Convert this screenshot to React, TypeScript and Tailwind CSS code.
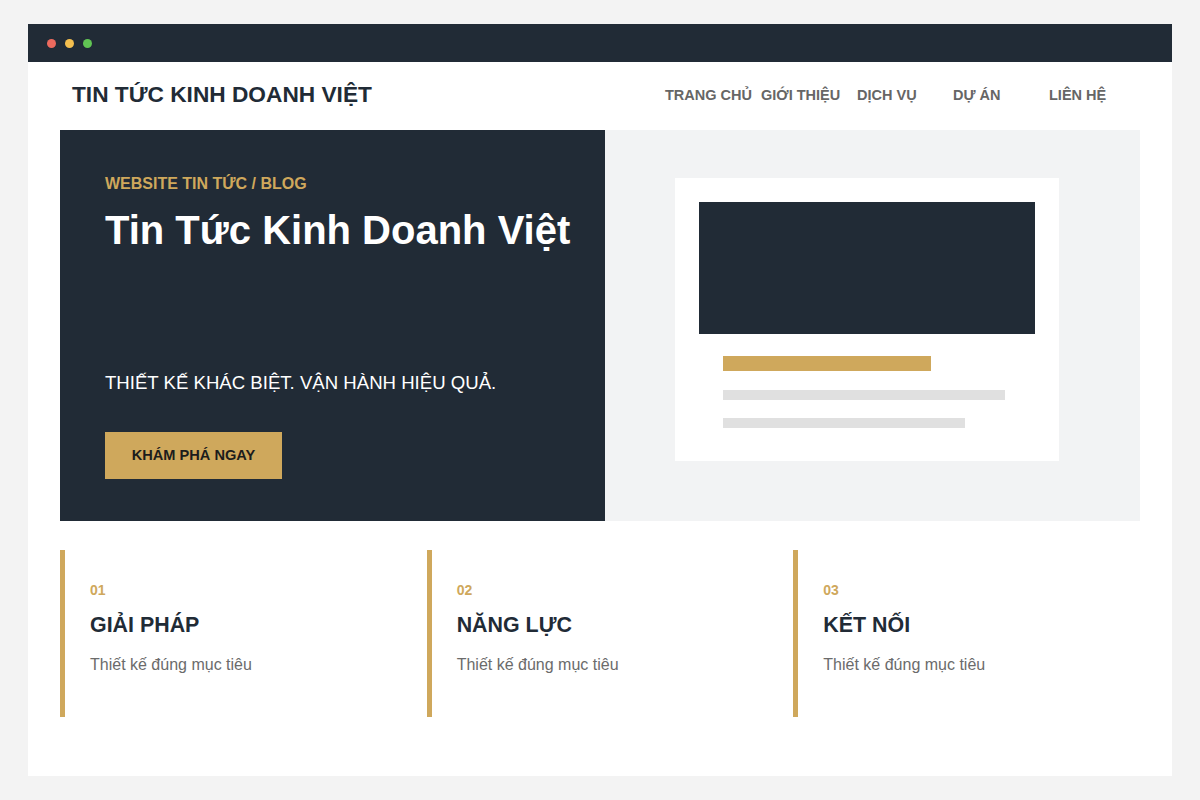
export default function App() {
  const nav = ["TRANG CHỦ", "GIỚI THIỆU", "DỊCH VỤ", "DỰ ÁN", "LIÊN HỆ"];
  const features = [
    { num: "01", title: "GIẢI PHÁP" },
    { num: "02", title: "NĂNG LỰC" },
    { num: "03", title: "KẾT NỐI" },
  ];

  return (
    <div className="min-h-[800px] w-[1200px] bg-[#f3f3f3] pt-6 font-['Liberation_Sans',Arial,sans-serif]">
      <div className="mx-[28px] h-[752px] bg-white">
        {/* window bar */}
        <div className="flex h-[38px] items-center gap-[9px] bg-[#212b36] pl-[19px]">
          <span className="h-[9px] w-[9px] rounded-full bg-[#ec6a5e]" />
          <span className="h-[9px] w-[9px] rounded-full bg-[#f4bf4f]" />
          <span className="h-[9px] w-[9px] rounded-full bg-[#61c554]" />
        </div>

        {/* header */}
        <header className="flex h-[68px] items-center justify-between pl-[44px] pr-[43px]">
          <div className="mb-[4px] text-[22.7px] font-bold leading-none text-[#212b36]">TIN TỨC KINH DOANH VIỆT</div>
          <nav className="flex gap-4">
            {nav.map((n) => (
              <a key={n} className="w-[80px] whitespace-nowrap text-[14.5px] font-bold text-[#666666]">{n}</a>
            ))}
          </nav>
        </header>

        <div className="px-8">
          {/* hero */}
          <section className="flex h-[391px]">
            <div className="flex w-[545px] flex-col bg-[#212b36] pl-[45px] pt-[44px]">
              <p className="text-[16px] font-bold leading-[20px] text-[#cfa85c]">WEBSITE TIN TỨC / BLOG</p>
              <h1 className="mt-3 text-[40px] font-bold leading-[48px] text-white">Tin Tức Kinh Doanh Việt</h1>
              <p className="mt-[117px] text-[18.6px] leading-[24px] text-white">THIẾT KẾ KHÁC BIỆT. VẬN HÀNH HIỆU QUẢ.</p>
              <button className="mt-[37px] flex h-[47px] w-[177px] items-center justify-center bg-[#cfa85c] text-[14.6px] font-bold text-[#1c1c1c]">
                KHÁM PHÁ NGAY
              </button>
            </div>
            <div className="flex-1 bg-[#f2f3f4] pl-[70px] pt-[48px]">
              <div className="h-[283px] w-[384px] bg-white p-6">
                <div className="h-[132px] bg-[#212b36]" />
                <div className="px-6 pt-[22px]">
                  <div className="h-[15px] w-[208px] bg-[#cfa85c]" />
                  <div className="mt-[19px] h-[10px] w-[282px] bg-[#e0e0e0]" />
                  <div className="mt-[18px] h-[10px] w-[242px] bg-[#e0e0e0]" />
                </div>
              </div>
            </div>
          </section>

          {/* features */}
          <section className="mt-[29px] grid grid-cols-3 gap-5">
            {features.map((f) => (
              <div key={f.num} className="h-[167px] border-l-[5px] border-[#cfa85c] pl-[25px] pt-[31px]">
                <div className="text-[14px] font-bold leading-[18px] text-[#cfa85c]">{f.num}</div>
                <div className="mt-[13px] text-[21.4px] font-bold leading-[26px] text-[#212b36]">{f.title}</div>
                <div className="mt-[17px] text-[16px] leading-[20px] text-[#6b6b6b]">Thiết kế đúng mục tiêu</div>
              </div>
            ))}
          </section>
        </div>
      </div>
    </div>
  );
}
